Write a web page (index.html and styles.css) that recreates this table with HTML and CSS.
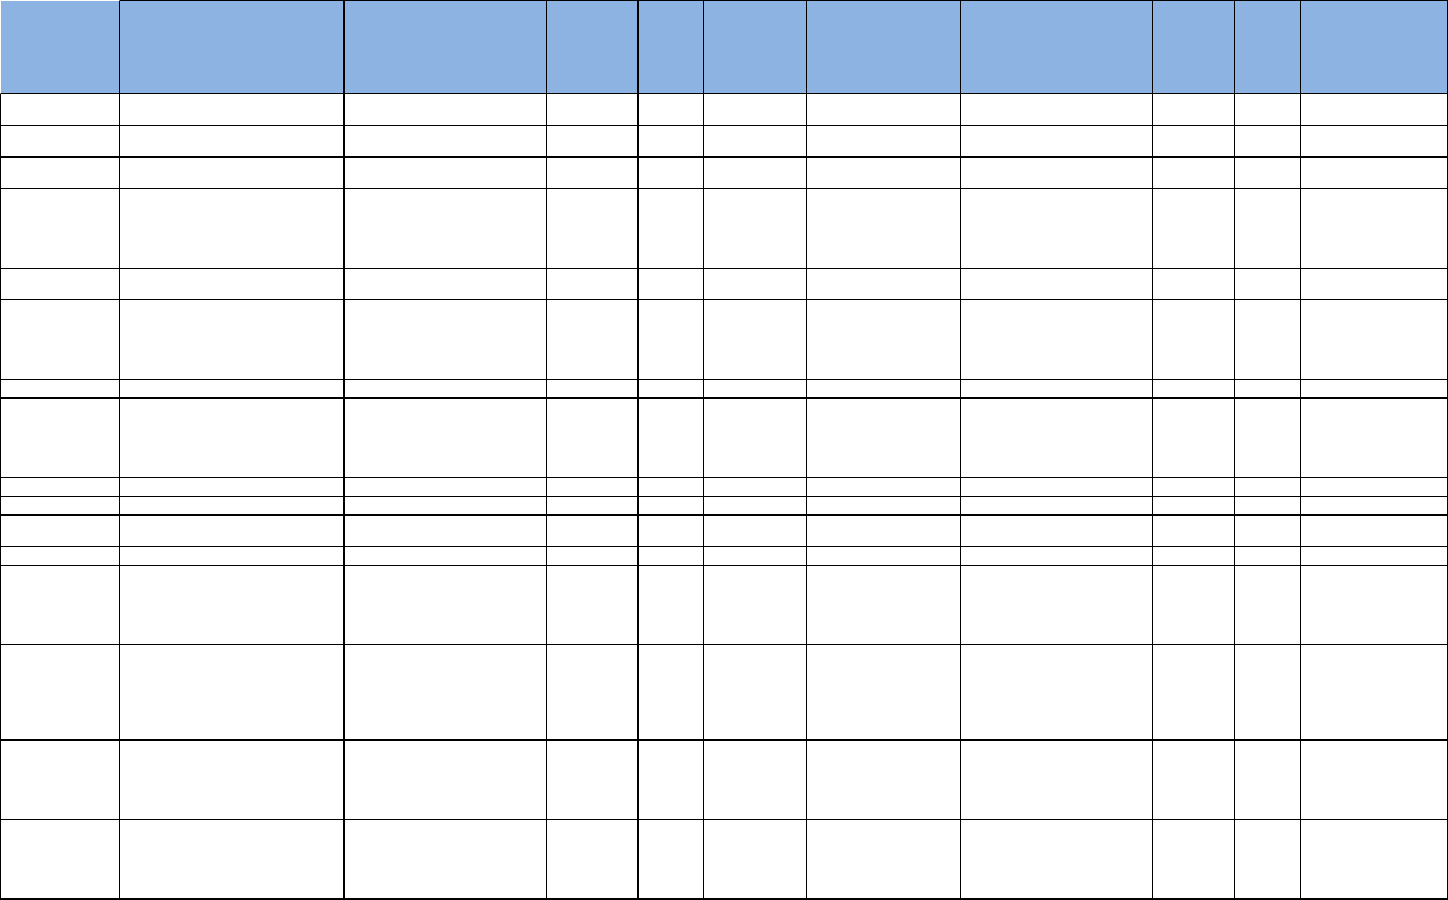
FILE: index.html
```html
<!DOCTYPE html>
<html lang="en">
<head>
<meta charset="utf-8">
<title>Sheet</title>
<link rel="stylesheet" href="styles.css">
</head>
<body>
<div class="sheet">
  <div class="row head"><div class="cell"></div><div class="cell"></div><div class="cell"></div><div class="cell"></div><div class="cell"></div><div class="cell"></div><div class="cell"></div><div class="cell"></div><div class="cell"></div><div class="cell"></div><div class="cell"></div></div>
  <div class="row"><div class="cell"></div><div class="cell"></div><div class="cell"></div><div class="cell"></div><div class="cell"></div><div class="cell"></div><div class="cell"></div><div class="cell"></div><div class="cell"></div><div class="cell"></div><div class="cell"></div></div>
  <div class="row thick"><div class="cell"></div><div class="cell"></div><div class="cell"></div><div class="cell"></div><div class="cell"></div><div class="cell"></div><div class="cell"></div><div class="cell"></div><div class="cell"></div><div class="cell"></div><div class="cell"></div></div>
  <div class="row"><div class="cell"></div><div class="cell"></div><div class="cell"></div><div class="cell"></div><div class="cell"></div><div class="cell"></div><div class="cell"></div><div class="cell"></div><div class="cell"></div><div class="cell"></div><div class="cell"></div></div>
  <div class="row"><div class="cell"></div><div class="cell"></div><div class="cell"></div><div class="cell"></div><div class="cell"></div><div class="cell"></div><div class="cell"></div><div class="cell"></div><div class="cell"></div><div class="cell"></div><div class="cell"></div></div>
  <div class="row"><div class="cell"></div><div class="cell"></div><div class="cell"></div><div class="cell"></div><div class="cell"></div><div class="cell"></div><div class="cell"></div><div class="cell"></div><div class="cell"></div><div class="cell"></div><div class="cell"></div></div>
  <div class="row"><div class="cell"></div><div class="cell"></div><div class="cell"></div><div class="cell"></div><div class="cell"></div><div class="cell"></div><div class="cell"></div><div class="cell"></div><div class="cell"></div><div class="cell"></div><div class="cell"></div></div>
  <div class="row thick"><div class="cell"></div><div class="cell"></div><div class="cell"></div><div class="cell"></div><div class="cell"></div><div class="cell"></div><div class="cell"></div><div class="cell"></div><div class="cell"></div><div class="cell"></div><div class="cell"></div></div>
  <div class="row"><div class="cell"></div><div class="cell"></div><div class="cell"></div><div class="cell"></div><div class="cell"></div><div class="cell"></div><div class="cell"></div><div class="cell"></div><div class="cell"></div><div class="cell"></div><div class="cell"></div></div>
  <div class="row"><div class="cell"></div><div class="cell"></div><div class="cell"></div><div class="cell"></div><div class="cell"></div><div class="cell"></div><div class="cell"></div><div class="cell"></div><div class="cell"></div><div class="cell"></div><div class="cell"></div></div>
  <div class="row thick"><div class="cell"></div><div class="cell"></div><div class="cell"></div><div class="cell"></div><div class="cell"></div><div class="cell"></div><div class="cell"></div><div class="cell"></div><div class="cell"></div><div class="cell"></div><div class="cell"></div></div>
  <div class="row"><div class="cell"></div><div class="cell"></div><div class="cell"></div><div class="cell"></div><div class="cell"></div><div class="cell"></div><div class="cell"></div><div class="cell"></div><div class="cell"></div><div class="cell"></div><div class="cell"></div></div>
  <div class="row"><div class="cell"></div><div class="cell"></div><div class="cell"></div><div class="cell"></div><div class="cell"></div><div class="cell"></div><div class="cell"></div><div class="cell"></div><div class="cell"></div><div class="cell"></div><div class="cell"></div></div>
  <div class="row"><div class="cell"></div><div class="cell"></div><div class="cell"></div><div class="cell"></div><div class="cell"></div><div class="cell"></div><div class="cell"></div><div class="cell"></div><div class="cell"></div><div class="cell"></div><div class="cell"></div></div>
  <div class="row thick"><div class="cell"></div><div class="cell"></div><div class="cell"></div><div class="cell"></div><div class="cell"></div><div class="cell"></div><div class="cell"></div><div class="cell"></div><div class="cell"></div><div class="cell"></div><div class="cell"></div></div>
  <div class="row"><div class="cell"></div><div class="cell"></div><div class="cell"></div><div class="cell"></div><div class="cell"></div><div class="cell"></div><div class="cell"></div><div class="cell"></div><div class="cell"></div><div class="cell"></div><div class="cell"></div></div>
  <div class="row thick"><div class="cell"></div><div class="cell"></div><div class="cell"></div><div class="cell"></div><div class="cell"></div><div class="cell"></div><div class="cell"></div><div class="cell"></div><div class="cell"></div><div class="cell"></div><div class="cell"></div></div>
</div>
</body>
</html>
```
FILE: styles.css
```css
html, body {
  margin: 0;
  padding: 0;
  background: #ffffff;
  font-family: "Liberation Sans", Arial, sans-serif;
}

.sheet {
  display: grid;
  width: 1448px;
  grid-template-columns: 120px 225px 202px 92px 65px 103px 154px 192px 82px 66px 147px;
  grid-template-rows: 94px 32px 32px 31px 80px 31px 80px 19px 79px 19px 19px 31px 19px 79px 96px 79px 80px;
}

.row {
  display: contents;
}

.cell {
  box-sizing: border-box;
  border-right: 1px solid #000000;
  border-bottom: 1px solid #000000;
  background: #ffffff;
}

.cell:first-child {
  border-left: 1px solid #000000;
}

.cell:nth-child(2),
.cell:nth-child(4) {
  border-right-width: 2px;
}

.row.thick > .cell {
  border-bottom-width: 2px;
}

.row.head > .cell {
  background: #8db3e2;
  border-top: 1px solid #000000;
}

.row.head > .cell:first-child {
  border-top-color: #ffffff;
  border-left-color: #ffffff;
}
```
